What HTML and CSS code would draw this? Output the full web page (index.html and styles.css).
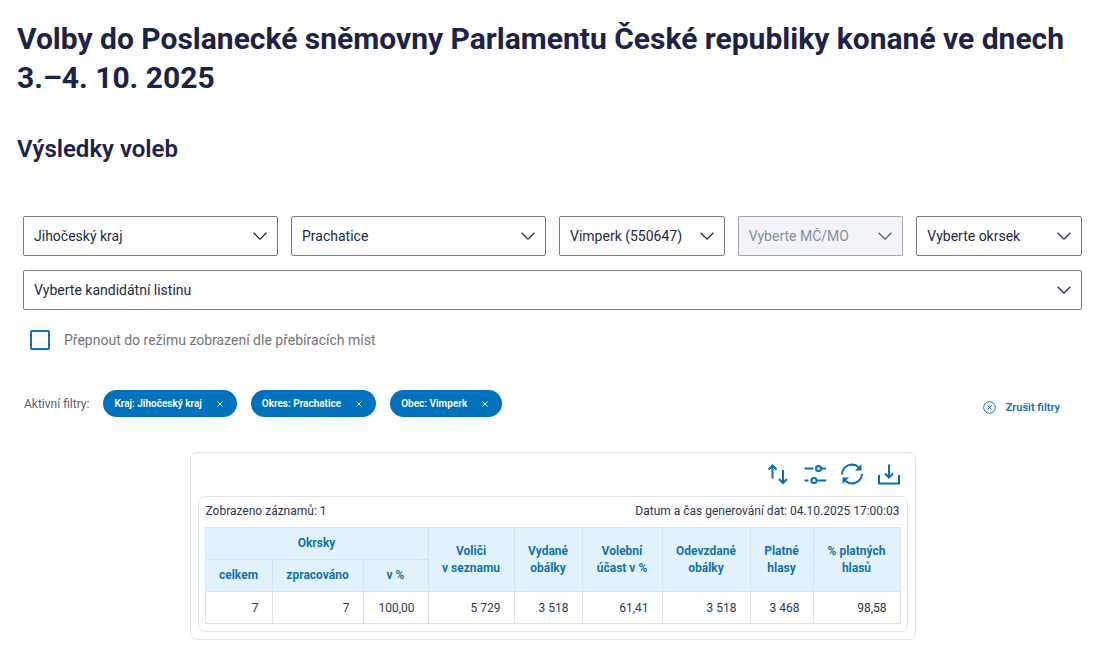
FILE: index.html
```html
<!DOCTYPE html>
<html lang="cs">
  <head>
    <meta charset="UTF-8">
    <meta name="viewport" content="width=device-width, initial-scale=1">
    <title>Výsledky voleb</title>
    <link rel="stylesheet" href="styles.css">
  </head>
  <body>

    <main>
      <h1 class="title">Volby do Poslanecké sněmovny Parlamentu České republiky konané ve dnech 3.–4. 10. 2025</h1>
      <h2 class="subtitle">Výsledky voleb</h2>

      <div class="panel">
        <form class="filters">
          <div class="select select--wide">
            <select aria-label="Kraj"><option>Jihočeský kraj</option></select>
            <svg class="select__arrow" viewBox="0 0 14 8"><path d="M.6.8 7 7.1 13.4.8"/></svg>
          </div>
          <div class="select select--wide">
            <select aria-label="Okres"><option>Prachatice</option></select>
            <svg class="select__arrow" viewBox="0 0 14 8"><path d="M.6.8 7 7.1 13.4.8"/></svg>
          </div>
          <div class="select">
            <select aria-label="Obec"><option>Vimperk (550647)</option></select>
            <svg class="select__arrow" viewBox="0 0 14 8"><path d="M.6.8 7 7.1 13.4.8"/></svg>
          </div>
          <div class="select select--disabled">
            <select aria-label="MČ/MO" disabled><option>Vyberte MČ/MO</option></select>
            <svg class="select__arrow" viewBox="0 0 14 8"><path d="M.6.8 7 7.1 13.4.8"/></svg>
          </div>
          <div class="select">
            <select aria-label="Okrsek"><option>Vyberte okrsek</option></select>
            <svg class="select__arrow" viewBox="0 0 14 8"><path d="M.6.8 7 7.1 13.4.8"/></svg>
          </div>
          <div class="select select--full">
            <select aria-label="Kandidátní listina"><option>Vyberte kandidátní listinu</option></select>
            <svg class="select__arrow" viewBox="0 0 14 8"><path d="M.6.8 7 7.1 13.4.8"/></svg>
          </div>
        </form>

        <label class="switch-mode">
          <input class="switch-mode__box" type="checkbox">
          Přepnout do režimu zobrazení dle přebíracích míst
        </label>

        <div class="active-filters">
          <span class="active-filters__label">Aktivní filtry:</span>
          <button class="chip" type="button">Kraj: Jihočeský kraj
            <svg class="chip__close" viewBox="0 0 6 6"><path d="M.5.5l5 5M5.5.5l-5 5"/></svg>
          </button>
          <button class="chip" type="button">Okres: Prachatice
            <svg class="chip__close" viewBox="0 0 6 6"><path d="M.5.5l5 5M5.5.5l-5 5"/></svg>
          </button>
          <button class="chip" type="button">Obec: Vimperk
            <svg class="chip__close" viewBox="0 0 6 6"><path d="M.5.5l5 5M5.5.5l-5 5"/></svg>
          </button>
          <button class="clear" type="button">
            <svg class="clear__icon" viewBox="0 0 13 13"><circle cx="6.5" cy="6.5" r="5.8"/><path d="M4.5 4.5l4 4M8.5 4.5l-4 4"/></svg>
            Zrušit filtry
          </button>
        </div>

        <section class="results">
          <div class="results__tools">
            <button class="tool" type="button" aria-label="Řazení">
              <svg viewBox="0 0 24 24"><path d="M6.500 16.500V3.500M2.500 7.500l4-4 4 4M17 8v13M13 17l4 4 4-4"/></svg>
            </button>
            <button class="tool" type="button" aria-label="Sloupce">
              <svg viewBox="0 0 24 24"><path d="M1.500 6.500h9M18.500 6.500H23M1.500 18.500h4M14.500 18.500H23"/><circle cx="15.500" cy="6.500" r="2.600"/><circle cx="11" cy="18.500" r="2.600"/></svg>
            </button>
            <button class="tool" type="button" aria-label="Obnovit">
              <svg viewBox="0 0 24 24"><path d="M2 12.500a10 10 0 0 1 17-7M22 12a10 10 0 0 1-17 6.500"/><path class="tool__fill" d="M21.500 2v6.500H15zM2.500 22v-6.500H9z"/></svg>
            </button>
            <button class="tool" type="button" aria-label="Stáhnout">
              <svg viewBox="0 0 24 24"><path d="M12 2.500v13M8 11.500l4 4 4-4M2 13v8.500h20V13"/></svg>
            </button>
          </div>

          <div class="results__inner">
            <div class="results__info">
              <span>Zobrazeno záznamů: 1</span>
              <span>Datum a čas generování dat: 04.10.2025 17:00:03</span>
            </div>
            <table class="table">
              <colgroup>
                <col class="col-total">
                <col class="col-done">
                <col class="col-done-pct">
                <col class="col-voters">
                <col class="col-issued">
                <col class="col-turnout">
                <col class="col-returned">
                <col class="col-valid">
                <col class="col-valid-pct">
              </colgroup>
              <thead>
                <tr>
                  <th colspan="3">Okrsky</th>
                  <th rowspan="2">Voliči<br>v&nbsp;seznamu</th>
                  <th rowspan="2">Vydané<br>obálky</th>
                  <th rowspan="2">Volební<br>účast v&nbsp;%</th>
                  <th rowspan="2">Odevzdané<br>obálky</th>
                  <th rowspan="2">Platné<br>hlasy</th>
                  <th rowspan="2">%&nbsp;platných<br>hlasů</th>
                </tr>
                <tr>
                  <th>celkem</th>
                  <th>zpracováno</th>
                  <th>v&nbsp;%</th>
                </tr>
              </thead>
              <tbody>
                <tr>
                  <td>7</td>
                  <td>7</td>
                  <td>100,00</td>
                  <td>5&nbsp;729</td>
                  <td>3&nbsp;518</td>
                  <td>61,41</td>
                  <td>3&nbsp;518</td>
                  <td>3&nbsp;468</td>
                  <td>98,58</td>
                </tr>
              </tbody>
            </table>
          </div>
        </section>
      </div>
    </main>

  </body>
</html>
```

FILE: styles.css
```css
* {
  box-sizing: border-box;
}
body {
  margin: 0;
  padding: 19px 17px 9px;
  font-family: Roboto, "Liberation Sans", sans-serif;
  font-size: 12px;
  color: #30364f;
  background-color: #fff;
}
button,
select {
  font-family: inherit;
  margin: 0;
}
button {
  cursor: pointer;
}
svg {
  display: block;
  fill: none;
  stroke: currentColor;
}

.title {
  margin: 0;
  font-size: 30px;
  line-height: 39px;
  font-weight: 700;
  color: #1d2248;
}
.subtitle {
  margin: 36px 0 0;
  font-size: 24px;
  line-height: 32px;
  font-weight: 600;
  color: #1d2248;
}
.panel {
  margin: 51px 1px 0 6px;
}

/* filters */
.filters {
  display: grid;
  grid-template-columns: repeat(12, 1fr);
  gap: 14px 13px;
}
.select {
  display: grid;
  align-items: center;
  grid-column: span 2;
  color: #222b45;
}
.select--wide {
  grid-column: span 3;
}
.select--full {
  grid-column: span 12;
}
.select select {
  grid-area: 1 / 1;
  appearance: none;
  width: 100%;
  height: 40px;
  padding: 0 36px 0 10px;
  border: solid 1px #777b80;
  border-radius: 2px;
  background-color: #fff;
  color: inherit;
  font-size: 14px;
}
.select__arrow {
  grid-area: 1 / 1;
  justify-self: end;
  width: 14px;
  height: 8px;
  margin-right: 11px;
  stroke-width: 1.2;
  pointer-events: none;
}
.select--disabled {
  color: #8a8f9c;
}
.select--disabled select {
  background-color: #f2f4f9;
  border-color: #a5a8b0;
  opacity: 1;
}
.select--disabled .select__arrow {
  color: #555a68;
}

.switch-mode {
  display: flex;
  align-items: center;
  gap: 14px;
  width: fit-content;
  margin: 20px 0 0 7px;
  font-size: 14px;
  line-height: 20px;
  color: #757575;
}
.switch-mode__box {
  appearance: none;
  width: 20px;
  height: 20px;
  margin: 0;
  border: solid 2px #1a6fa8;
  border-radius: 2px;
}
.switch-mode__box:checked {
  background-color: #1a6fa8;
}

/* active filters */
.active-filters {
  display: flex;
  align-items: center;
  gap: 14px;
  margin: 40px 22px 0 1px;
}
.active-filters__label {
  color: #5a5f70;
}
.chip {
  display: flex;
  align-items: center;
  gap: 15px;
  height: 27px;
  padding: 0 14px 0 11px;
  border: none;
  border-radius: 14px;
  background-color: #0071bc;
  color: #fff;
  font-size: 10px;
  font-weight: 600;
}
.chip__close {
  width: 6px;
  height: 6px;
}
.clear {
  display: flex;
  align-items: center;
  gap: 10px;
  margin: 8px 0 0 auto;
  padding: 0;
  border: none;
  background: none;
  color: #1a6fa8;
  font-size: 11px;
  font-weight: 600;
}
.clear__icon {
  width: 13px;
  height: 13px;
}

/* results */
.results {
  width: fit-content;
  margin: 35px auto 0;
  padding: 9px 7px 7px;
  border: solid 1px #e3e4e8;
  border-radius: 7px;
}
.results__tools {
  display: flex;
  justify-content: flex-end;
  gap: 13px;
  padding: 0 7px 10px;
}
.tool {
  width: 24px;
  height: 24px;
  padding: 0;
  border: none;
  background: none;
  color: #0b6fae;
}
.tool svg {
  stroke-width: 2;
}
.tool__fill {
  fill: currentColor;
  stroke: none;
}
.results__inner {
  padding: 6px 6px 7px;
  border: solid 1px #e3e4e8;
  border-radius: 7px;
}
.results__info {
  display: flex;
  justify-content: space-between;
  padding: 0 1px;
  line-height: 16px;
}

.table {
  margin-top: 8px;
  border-collapse: collapse;
}
.table th,
.table td {
  height: 32px;
  padding: 0 13px;
  border: solid 1px #dce3ea;
  white-space: nowrap;
}
.table th {
  background-color: #e3f3fe;
  color: #1272b0;
  line-height: 17px;
  font-weight: 700;
}
.table td {
  text-align: right;
}
.col-total { width: 67px; }
.col-done { width: 91px; }
.col-done-pct { width: 65px; }
.col-voters { width: 86px; }
.col-issued { width: 68px; }
.col-turnout { width: 80px; }
.col-returned { width: 88px; }
.col-valid { width: 63px; }
.col-valid-pct { width: 87px; }
```
